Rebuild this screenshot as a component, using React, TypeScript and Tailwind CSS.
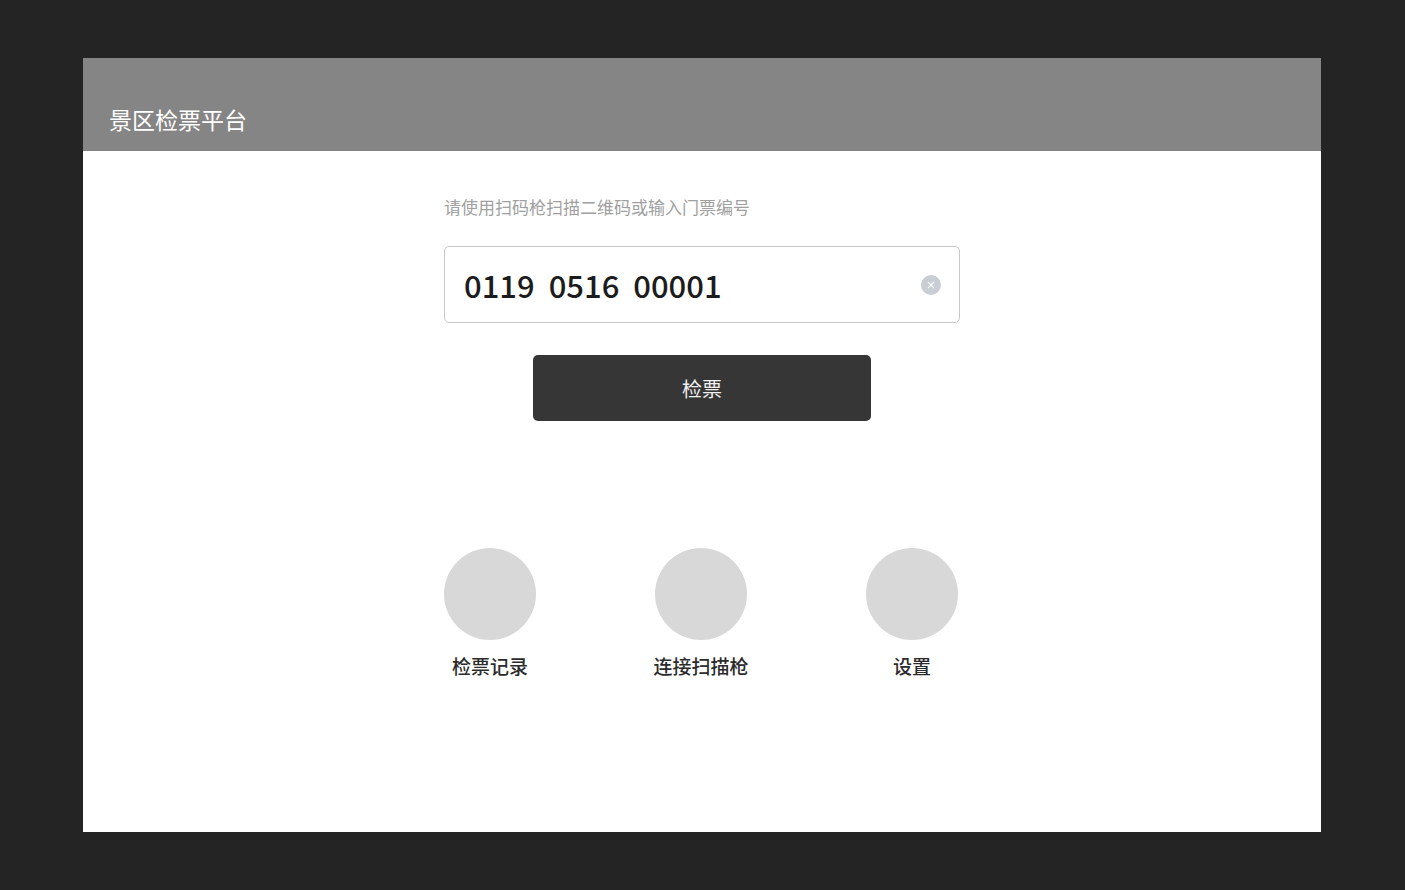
import React, { useRef, useState } from 'react';

const shortcuts = [
  { id: 'records', label: '检票记录' },
  { id: 'scanner', label: '连接扫描枪' },
  { id: 'settings', label: '设置' },
];

export default function App() {
  const [ticketNo, setTicketNo] = useState('0119  0516  00001');
  const inputRef = useRef<HTMLInputElement>(null);

  function clearTicket() {
    setTicketNo('');
    inputRef.current?.focus();
  }

  return (
    <div className="flex min-h-screen flex-col bg-[#242424] px-[83px] py-[58px] pr-[84px] font-['Noto_Sans_CJK_SC',sans-serif]">
      <div className="flex flex-1 flex-col bg-white">
        <header className="bg-[#858585] px-[26px] pt-[45px] pb-4">
          <h1 className="text-[23px] leading-8 font-normal text-white">景区检票平台</h1>
        </header>

        <main className="mx-auto w-full max-w-[516px] pt-11 pb-12">
          <form onSubmit={(e) => e.preventDefault()}>
            <label htmlFor="ticket-no" className="block text-[17px] leading-6 font-normal text-[#a0a0a0]">
              请使用扫码枪扫描二维码或输入门票编号
            </label>

            <div className="mt-[27px] flex h-[77px] items-center rounded-[5px] border border-[#c8c8c8] pr-[18px] pl-[19px]">
              <input
                id="ticket-no"
                ref={inputRef}
                type="text"
                value={ticketNo}
                onChange={(e) => setTicketNo(e.target.value)}
                className="h-full min-w-0 flex-1 text-[31px] font-medium text-[#1c1c1c] outline-none"
              />
              <button
                type="button"
                aria-label="清除"
                onClick={clearTicket}
                className="flex size-5 items-center justify-center rounded-full bg-[#c9cdd4]"
              >
                <svg viewBox="0 0 8 8" className="size-2" fill="none" stroke="white" strokeWidth="1.2">
                  <path d="M1 1l6 6M7 1L1 7" />
                </svg>
              </button>
            </div>

            <button
              type="submit"
              className="mx-auto mt-8 block h-[66px] w-[338px] max-w-full rounded-[5px] bg-[#363636] pt-[2px] text-[20px] font-normal text-[#f0f0f0]"
            >
              检票
            </button>
          </form>

          <nav className="mt-[127px] flex justify-between pr-[2px]">
            {shortcuts.map((item) => (
              <button key={item.id} type="button" className="flex flex-col items-center">
                <span className="size-[92px] rounded-full bg-[#d8d8d8]" />
                <span className="mt-3 text-[19px] leading-7 font-medium text-[#2b2b2b]">{item.label}</span>
              </button>
            ))}
          </nav>
        </main>
      </div>
    </div>
  );
}
